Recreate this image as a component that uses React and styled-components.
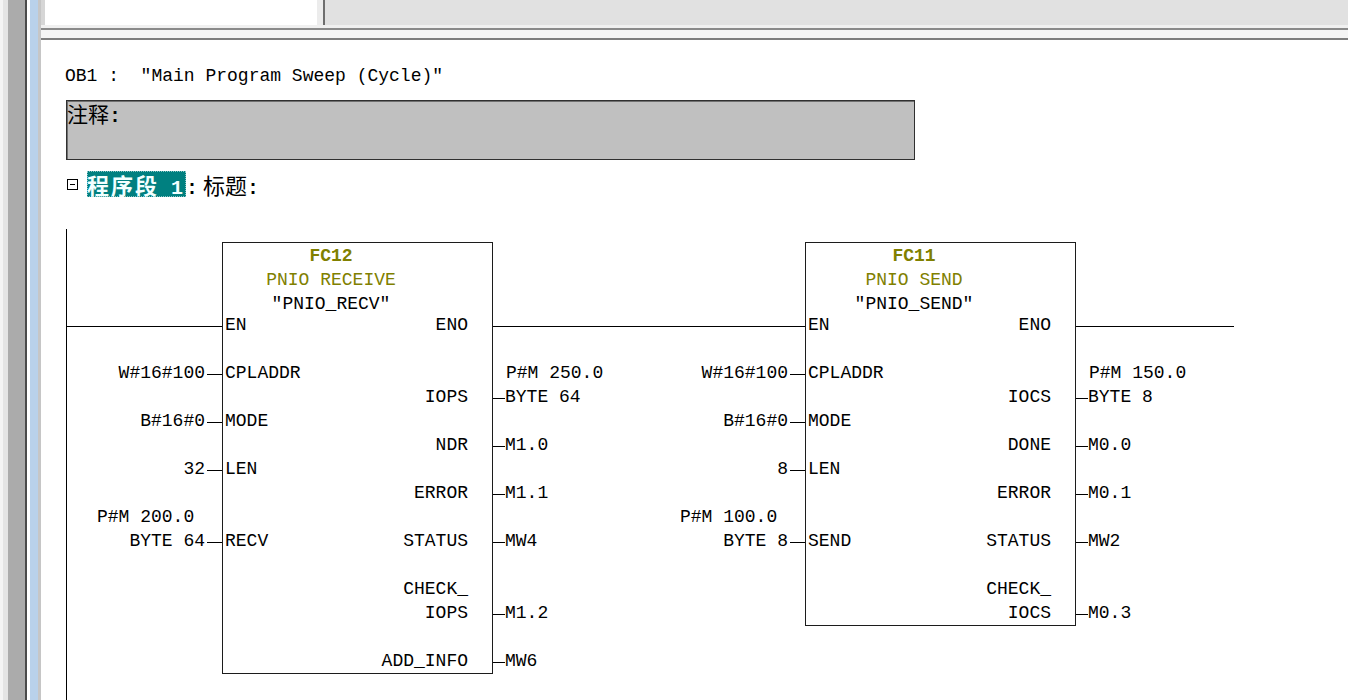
import React from "react";
import styled, { createGlobalStyle } from "styled-components";

const mono = `"Liberation Mono", "DejaVu Sans Mono", monospace`;
const cjk = `"Noto Sans CJK SC", "Noto Sans CJK JP", sans-serif`;

const GlobalStyle = createGlobalStyle`
  html, body {
    margin: 0;
    padding: 0;
  }
  body {
    width: 1348px;
    height: 700px;
    overflow: hidden;
    background: #fff;
    font-family: ${mono};
  }
`;

const Window = styled.div`
  display: flex;
  height: 700px;
  overflow: hidden;
`;

// window chrome on the left: frame, shadow line, blue splitter
const LeftFrame = styled.div`
  width: 41px;
  flex-shrink: 0;
  background: linear-gradient(
    to right,
    #f4f4f4 0 3px,
    #e4e4e4 3px 8px,
    #ababab 8px 25px,
    #4a4a4a 25px 27px,
    #ffffff 27px 30px,
    #b9d1ea 30px 38px,
    #c6c6c6 38px 41px
  );
`;

const Main = styled.div`
  flex: 1;
  min-width: 0;
  display: flex;
  flex-direction: column;
`;

const TopBar = styled.div`
  display: flex;
  height: 25px;
  background: #e1e1e1;
  border-bottom: 3px solid #f0f0f0;
`;

const TreePane = styled.div`
  width: 272px;
  background: #fff;
  border-left: 4px solid #d6d6d6;
`;

const PaneSplitter = styled.div`
  width: 6px;
  background: #ececec;
  border-right: 2px solid #6e6e6e;
`;

const Splitter = styled.div`
  height: 8px;
  background: #f5f5f5;
  border-top: 2px solid #8a8a8a;
  border-bottom: 2px solid #7e7e7e;
`;

const Editor = styled.div`
  flex: 1;
  min-height: 0;
  overflow: hidden;
  display: flex;
  flex-direction: column;
  padding: 24px 0 0 25px;
  background: #fff;
  color: #000;
  font-family: ${mono};
  font-size: 18px;
`;

const BlockTitle = styled.div`
  height: 24px;
  line-height: 24px;
  white-space: pre;
  margin-left: -1px;
`;

const CommentBox = styled.div`
  margin-top: 12px;
  width: 849px;
  height: 60px;
  box-sizing: border-box;
  background: #c0c0c0;
  border: 1px solid #303030;
  box-shadow: inset 1px 1px 0 #707070;
  line-height: 24px;
`;

const Cjk = styled.span`
  font-family: ${cjk};
  font-size: ${(p) => p.$size || 21}px;
  font-weight: ${(p) => (p.$bold ? 700 : 400)};
  letter-spacing: ${(p) => p.$spacing || 0}px;
  margin-left: ${(p) => p.$gap || 0}px;
`;

const Colon = styled.span`
  font-size: 20px;
  font-weight: 700;
`;

const NetworkRow = styled.div`
  margin-top: 11px;
  height: 26px;
  display: flex;
  align-items: center;
`;

const NetworkText = styled.div`
  height: 26px;
  line-height: 26px;
  white-space: pre;
`;

const Toggle = styled.svg`
  width: 11px;
  height: 11px;
  flex-shrink: 0;
  margin: 1px 9px 0 1px;
`;

const NetworkMarker = styled.span`
  display: inline-block;
  height: 26px;
  vertical-align: top;
  padding-right: 3px;
  background: #008080;
  color: #f2ffff;
  font-weight: 700;
  outline: 1px dotted rgba(255, 255, 255, 0.55);
  outline-offset: -1px;
`;

const NetworkNumber = styled.span`
  font-size: 20px;
  font-weight: 700;
`;

const Rung = styled.div`
  margin-top: 32px;
  flex: 1;
  display: flex;
  align-items: flex-start;
  padding-top: 13px;
  border-left: 1px solid #000;
`;

const BlockRow = styled.div`
  display: flex;
  align-items: flex-start;
`;

const PinColumn = styled.div`
  width: ${(p) => p.$width}px;
  flex-shrink: 0;
  padding-top: 71px;
`;

const Slot = styled.div`
  height: 24px;
  display: flex;
  justify-content: ${(p) => (p.$side === "in" ? "flex-end" : "flex-start")};
`;

const Operand = styled.span`
  line-height: 24px;
  white-space: pre;
`;

const Stub = styled.span`
  flex-shrink: 0;
  width: ${(p) => p.$w}px;
  height: 1px;
  margin-top: 13px;
  margin-left: ${(p) => p.$gap || 0}px;
  background: ${(p) => (p.$blank ? "transparent" : "#000")};
`;

const Wire = styled.span`
  flex: 1;
  height: 1px;
  margin-top: 13px;
  background: #000;
`;

const Box = styled.div`
  width: 271px;
  flex-shrink: 0;
  box-sizing: border-box;
  border: 1px solid #1c1c1c;
  background: #fff;
`;

const Header = styled.div`
  width: 216px;
  padding-top: 1px;
  margin-bottom: -3px;
  text-align: center;
`;

const HeaderLine = styled.div`
  height: 24px;
  line-height: 24px;
  white-space: pre;
  color: ${(p) => (p.$olive ? "#808000" : "#000")};
  font-weight: ${(p) => (p.$bold ? 700 : 400)};
`;

const PinRow = styled.div`
  height: 24px;
  line-height: 24px;
  display: flex;
  justify-content: space-between;
  padding: 0 24px 0 2px;
  white-space: pre;
`;

const InSlot = ({ row }) => (
  <Slot $side="in">
    {row.wire && <Wire />}
    {row.a && (
      <>
        <Operand>{row.a}</Operand>
        <Stub $w={15} $gap={2} />
      </>
    )}
    {row.an && (
      <>
        <Operand>{row.an}</Operand>
        <Stub $w={15} $gap={2} $blank />
      </>
    )}
  </Slot>
);

const OutSlot = ({ row }) => (
  <Slot $side="out">
    {row.wire && <Wire />}
    {row.o && (
      <>
        <Stub $w={12} />
        <Operand>{row.o}</Operand>
      </>
    )}
    {row.on && (
      <>
        <Stub $w={13} $blank />
        <Operand>{row.on}</Operand>
      </>
    )}
  </Slot>
);

const FunctionBlock = ({ inWidth, outWidth, number, name, symbol, rows }) => (
  <BlockRow>
    <PinColumn $width={inWidth}>
      {rows.map((row, i) => (
        <InSlot key={i} row={row} />
      ))}
    </PinColumn>
    <Box>
      <Header>
        <HeaderLine $olive $bold>
          {number}
        </HeaderLine>
        <HeaderLine $olive>{name}</HeaderLine>
        <HeaderLine>{`\u2033${symbol}\u2033`}</HeaderLine>
      </Header>
      {rows.map((row, i) => (
        <PinRow key={i}>
          <span>{row.l || ""}</span>
          <span>{row.r || ""}</span>
        </PinRow>
      ))}
    </Box>
    <PinColumn $width={outWidth}>
      {rows.map((row, i) => (
        <OutSlot key={i} row={row} />
      ))}
    </PinColumn>
  </BlockRow>
);

const receiveRows = [
  { l: "EN", r: "ENO", wire: true },
  {},
  { l: "CPLADDR", a: "W#16#100", on: "P#M 250.0" },
  { r: "IOPS", o: "BYTE 64" },
  { l: "MODE", a: "B#16#0" },
  { r: "NDR", o: "M1.0" },
  { l: "LEN", a: "32" },
  { r: "ERROR", o: "M1.1" },
  { an: "P#M 200.0 " },
  { l: "RECV", a: "BYTE 64", r: "STATUS", o: "MW4" },
  {},
  { r: "CHECK_" },
  { r: "IOPS", o: "M1.2" },
  {},
  { r: "ADD_INFO", o: "MW6" },
];

const sendRows = [
  { l: "EN", r: "ENO", wire: true },
  {},
  { l: "CPLADDR", a: "W#16#100", on: "P#M 150.0" },
  { r: "IOCS", o: "BYTE 8" },
  { l: "MODE", a: "B#16#0" },
  { r: "DONE", o: "M0.0" },
  { l: "LEN", a: "8" },
  { r: "ERROR", o: "M0.1" },
  { an: "P#M 100.0 " },
  { l: "SEND", a: "BYTE 8", r: "STATUS", o: "MW2" },
  {},
  { r: "CHECK_" },
  { r: "IOCS", o: "M0.3" },
];

export default function App() {
  return (
    <>
      <GlobalStyle />
      <Window>
        <LeftFrame />
        <Main>
          <TopBar>
            <TreePane />
            <PaneSplitter />
          </TopBar>
          <Splitter />
          <Editor>
            <BlockTitle>{"OB1 :  \u2033Main Program Sweep (Cycle)\u2033"}</BlockTitle>
            <CommentBox>
              <Cjk>注释</Cjk>
              <Colon>:</Colon>
            </CommentBox>
            <NetworkRow>
              <Toggle viewBox="0 0 11 11">
                <rect x="0.5" y="0.5" width="10" height="10" fill="#fff" stroke="#000" />
                <line x1="3" y1="5.5" x2="8" y2="5.5" stroke="#000" />
              </Toggle>
              <NetworkText>
                <NetworkMarker>
                  <Cjk $size={22} $spacing={2} $bold>
                    程序段
                  </Cjk>
                  <NetworkNumber>{" 1"}</NetworkNumber>
                </NetworkMarker>
                <Colon>:</Colon>
                <Cjk $size={22} $gap={5}>
                  标题
                </Cjk>
                <Colon>:</Colon>
              </NetworkText>
            </NetworkRow>
            <Rung>
              <FunctionBlock
                inWidth={155}
                outWidth={156}
                number="FC12"
                name="PNIO RECEIVE"
                symbol="PNIO_RECV"
                rows={receiveRows}
              />
              <FunctionBlock
                inWidth={156}
                outWidth={158}
                number="FC11"
                name="PNIO SEND"
                symbol="PNIO_SEND"
                rows={sendRows}
              />
            </Rung>
          </Editor>
        </Main>
      </Window>
    </>
  );
}
